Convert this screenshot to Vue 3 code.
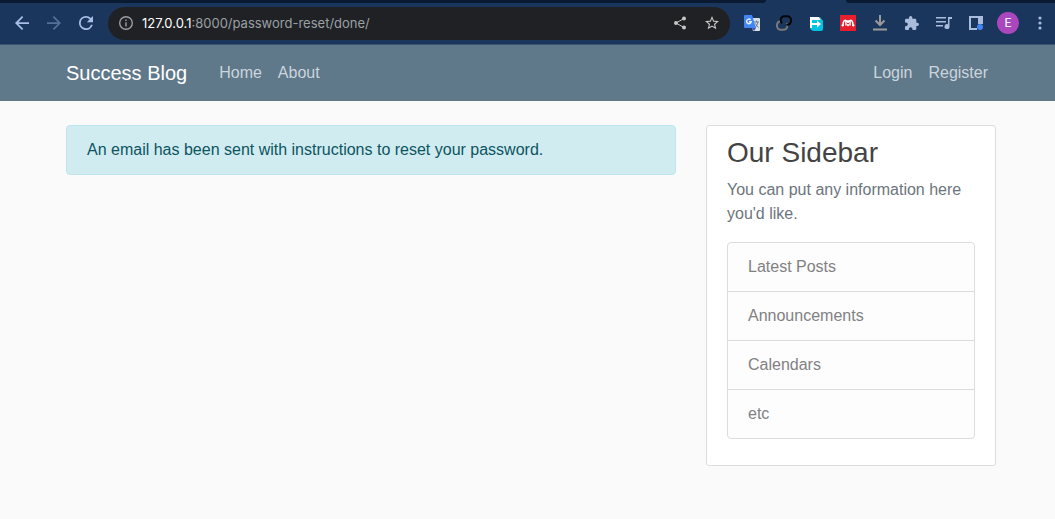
<script setup>
const navLeft = ['Home', 'About']
const navRight = ['Login', 'Register']
const sections = ['Latest Posts', 'Announcements', 'Calendars', 'etc']
</script>

<template>
  <div class="window">
    <div class="tabstrip"><span class="tabs-before"></span><span class="tabs-after"></span></div>
    <div class="toolbar">
      <button class="tool" aria-label="Back">
        <svg width="14" height="14" viewBox="4 4 16 16"><path fill="#a9c0e6" d="M20 11H7.83l5.59-5.59L12 4l-8 8 8 8 1.41-1.41L7.83 13H20v-2z" /></svg>
      </button>
      <button class="tool" aria-label="Forward">
        <svg width="14" height="14" viewBox="4 4 16 16"><path fill="#546f99" d="M12 4l-1.41 1.41L16.17 11H4v2h12.17l-5.58 5.59L12 20l8-8z" /></svg>
      </button>
      <button class="tool" aria-label="Reload">
        <svg width="14" height="14" viewBox="4 4 16 16"><path fill="#a9c0e6" d="M17.65 6.35A7.96 7.96 0 0 0 12 4a8 8 0 1 0 7.73 10h-2.08A6 6 0 1 1 12 6c1.66 0 3.14.69 4.22 1.78L13 11h7V4l-2.35 2.35z" /></svg>
      </button>
      <div class="omnibox">
        <button class="site" aria-label="Site information">
          <svg width="14" height="14" viewBox="2 2 20 20"><path fill="#9aa0a6" d="M11 7h2v2h-2zm0 4h2v6h-2zm1-9a10 10 0 1 0 0 20 10 10 0 0 0 0-20zm0 18a8 8 0 1 1 0-16 8 8 0 0 1 0 16z" /></svg>
        </button>
        <div class="url"><span class="host">127.0.0.1</span>:8000/password-reset/done/</div>
        <button class="tool" aria-label="Share">
          <svg width="14" height="14" viewBox="0 0 14 14" fill="#c4c7c5" stroke="#c4c7c5"><path fill="none" d="M11 2.5 3 7l8 4.500" /><g stroke="none"><circle cx="11" cy="2.500" r="2" /><circle cx="3" cy="7" r="2" /><circle cx="11" cy="11.500" r="2" /></g></svg>
        </button>
        <button class="tool" aria-label="Bookmark this page">
          <svg width="14" height="14" viewBox="2 2 20 20"><path fill="#c4c7c5" d="M22 9.240l-7.190-.62L12 2 9.190 8.630 2 9.240l5.460 4.730L5.820 21 12 17.270 18.180 21l-1.630-7.030L22 9.240zM12 15.400l-3.760 2.270 1-4.280-3.320-2.880 4.380-.38L12 6.100l1.710 4.040 4.380.38-3.320 2.880 1 4.280L12 15.400z" /></svg>
        </button>
      </div>
      <button class="tool" aria-label="Translate">
        <svg width="16" height="16" viewBox="0 0 16 16">
          <path fill="#dce0e3" d="M6 3h9q1 0 1 1v11q0 1-1 1H9z" />
          <path fill="#3f51b5" d="M8 13h4l-2 3z" />
          <path fill="#4285f4" d="M1 0h7l4 13H1q-1 0-1-1V1q0-1 1-1z" />
          <path fill="none" stroke="#e9f1ff" stroke-width="1.400" d="M6.600 4.800A2.300 2.300 0 1 0 7.200 6.700H5" />
          <path fill="none" stroke="#607d8b" d="M10 7h5M12.500 5.500V7M14 7q-.5 3-2.500 5M11.500 8.500q1 2.500 3 4" />
        </svg>
      </button>
      <button class="tool" aria-label="Link extension">
        <svg width="16" height="16" viewBox="0 0 16 16" fill="none" stroke-width="2">
          <path stroke="#77797c" d="M5 6.200h-.2A3.800 3.800 0 0 0 1 10v1a3.800 3.800 0 0 0 3.800 3.800h2.700a3.800 3.800 0 0 0 3.800-3.800q0-2-.8-3" />
          <path stroke="#050608" d="M6 8.200Q4.700 7 4.700 5A3.800 3.800 0 0 1 8.500 1.200h2.700A3.800 3.800 0 0 1 15 5v1a3.800 3.800 0 0 1-3.800 3.800h-.8" />
        </svg>
      </button>
      <button class="tool" aria-label="Page export extension">
        <svg width="16" height="16" viewBox="-2 -2 16 16">
          <path fill="#fff" d="M0 0h9l2 3H2v8H1q-1 0-1-1z" />
          <path fill="#00c4e0" d="M9 0h1l3 4v8q0 2-2 2H4q-3 0-4-3h9V3h2z" />
          <path fill="#00c4e0" d="M2 3h8v8H2z" />
          <path fill="#fff" d="M0 3h2v3h5V3.500L11 7l-4 3.500V8H2v2.500H0z" />
        </svg>
      </button>
      <button class="tool" aria-label="Mendeley">
        <svg width="16" height="16" viewBox="0 0 16 16">
          <path fill="#e61e2e" d="M0 0h16v16H0z" />
          <g fill="#fff"><circle cx="2.800" cy="10.200" r="1.200" /><circle cx="8" cy="10.200" r="1.100" /><circle cx="13.200" cy="10.200" r="1.200" /><circle cx="8" cy="6.800" r="1.400" /></g>
          <path fill="none" stroke="#fff" stroke-width="1.600" d="M3 9.800Q3.300 5.500 5.200 5.200 6 5.500 6 10.500M13 9.800q-.3-4.300-2.200-4.600-.8.300-.8 5.300M5 5.300l3 1.200 3-1.200" />
        </svg>
      </button>
      <button class="tool" aria-label="Downloads">
        <svg width="14" height="16" viewBox="0 0 14 16" fill="none" stroke="#9b9b9b" stroke-width="2"><path d="M7 0v10M2.500 5.500 7 10l4.500-4.500M0 14.500h14" /></svg>
      </button>
      <button class="tool" aria-label="Extensions">
        <svg width="14" height="14" viewBox="2 1 21 21"><path fill="#a9bcdc" d="M20.500 11H19V7a2 2 0 0 0-2-2h-4V3.500a2.500 2.500 0 0 0-5 0V5H4a2 2 0 0 0-2 2v3.800h1.500a2.700 2.700 0 0 1 0 5.400H2V20c0 1.100.9 2 2 2h3.800v-1.500a2.700 2.700 0 0 1 5.400 0V22H17a2 2 0 0 0 2-2v-4h1.500a2.500 2.500 0 0 0 0-5z" /></svg>
      </button>
      <button class="tool" aria-label="Media controls">
        <svg width="16" height="14" viewBox="0 0 16 14"><path fill="#a9bcdc" d="M0 1h10v1.500H0zM0 5h10v1.500H0zM0 9h7v1.500H0zM12 1h4v2h-2.500v7.500A2.500 2.500 0 1 1 12 8.300z" /></svg>
      </button>
      <button class="tool" aria-label="Side panel">
        <svg width="14" height="14" viewBox="0 0 14 14"><path fill="#a9bcdc" d="M0 0h14v8H9V2H2v10h6v2H0z" /><circle cx="11" cy="11" r="3" fill="#4285f4" /></svg>
      </button>
      <button class="tool" aria-label="Profile"><span class="avatar">E</span></button>
      <button class="tool" aria-label="Browser menu">
        <svg width="4" height="14" viewBox="0 0 4 14" fill="#a9bcdc"><circle cx="2" cy="2" r="1.600" /><circle cx="2" cy="7" r="1.600" /><circle cx="2" cy="12" r="1.600" /></svg>
      </button>
    </div>

    <header class="site-header">
      <nav class="container">
        <a class="brand" href="#">Success Blog</a>
        <a v-for="item in navLeft" :key="item" class="nav-link" href="#">{{ item }}</a>
        <span class="spacer"></span>
        <a v-for="item in navRight" :key="item" class="nav-link" href="#">{{ item }}</a>
      </nav>
    </header>

    <div class="page">
      <div class="container columns">
        <main>
          <div class="alert" role="alert">An email has been sent with instructions to reset your password.</div>
        </main>
        <aside class="sidebar">
          <h3>Our Sidebar</h3>
          <p>You can put any information here you'd like.</p>
          <ul>
            <li v-for="section in sections" :key="section">{{ section }}</li>
          </ul>
        </aside>
      </div>
    </div>
  </div>
</template>

<style>
body {
  margin: 0;
  background: #fafafa;
}
</style>

<style scoped>
* {
  box-sizing: border-box;
}
.window {
  font: 16px/24px "Liberation Sans", Arial, sans-serif;
  color: #333;
}
button {
  border: 0;
  padding: 0;
  background: none;
  font: inherit;
}
a {
  text-decoration: none;
}
.tabstrip {
  display: flex;
  justify-content: space-between;
  height: 3px;
  background: #1b365d;
}
.tabs-before,
.tabs-after {
  background: #0b1a33;
}
.tabs-before {
  flex: 766;
  border-bottom-right-radius: 3px;
}
.tabs-after {
  flex: 209;
  margin-left: 80px;
  border-bottom-left-radius: 3px;
}
.toolbar {
  display: flex;
  align-items: center;
  height: 42px;
  padding: 0 0 1px 6px;
  background: #1b365d;
  border-bottom: 1px solid #3a5375;
}
.tool {
  display: flex;
  flex: none;
  align-items: center;
  justify-content: center;
  width: 32px;
  height: 32px;
}
.toolbar > .tool:last-child {
  margin-right: -1px;
}
.omnibox {
  display: flex;
  flex: 1;
  align-items: center;
  height: 33px;
  margin: 0 6px;
  padding: 0 2px 0 11px;
  border-radius: 17px;
  background: #202124;
}
.site {
  display: flex;
  margin-right: 9px;
}
.url {
  flex: 1;
  font: 13px/20px Inter, sans-serif;
  color: #9aa0a6;
}
.host {
  color: #fff;
}
.avatar {
  width: 22px;
  height: 22px;
  border-radius: 50%;
  background: #ab47bc;
  color: #fff;
  font: 12px/22px Roboto, sans-serif;
  text-align: center;
}
.site-header,
.page {
  padding-left: 7px;
}
.site-header {
  background: #5f788a;
}
.container {
  display: flex;
  max-width: 960px;
  margin: 0 auto;
  padding: 0 15px;
}
nav.container {
  align-items: center;
  padding-top: 8px;
  padding-bottom: 8px;
}
.brand {
  margin-right: 24px;
  color: #fff;
  font-size: 20px;
  line-height: 30px;
}
.nav-link {
  padding: 8px;
  color: #cbd5db;
}
.spacer {
  flex: 1;
}
.columns {
  gap: 30px;
  align-items: flex-start;
  padding-top: 24px;
}
main {
  flex: 1;
}
.alert {
  padding: 12px 20px;
  border: 1px solid #bee5eb;
  border-radius: 4px;
  background: #d1ecf1;
  color: #0c5460;
}
.sidebar {
  width: 290px;
  padding: 10px 20px;
  border: 1px solid #ddd;
  border-radius: 3px;
  background: #fff;
}
h3 {
  margin: 0 0 8px;
  color: #444;
  font-size: 28px;
  font-weight: 400;
  line-height: 34px;
}
p {
  margin: 0 0 16px;
  color: #6c757d;
}
ul {
  margin: 0 0 16px;
  padding: 0;
  border: 1px solid #dcdcdc;
  border-radius: 4px;
  background: #fdfdfe;
  list-style: none;
}
li {
  padding: 12px 20px;
  color: #818182;
}
li + li {
  border-top: 1px solid #dcdcdc;
}
</style>
